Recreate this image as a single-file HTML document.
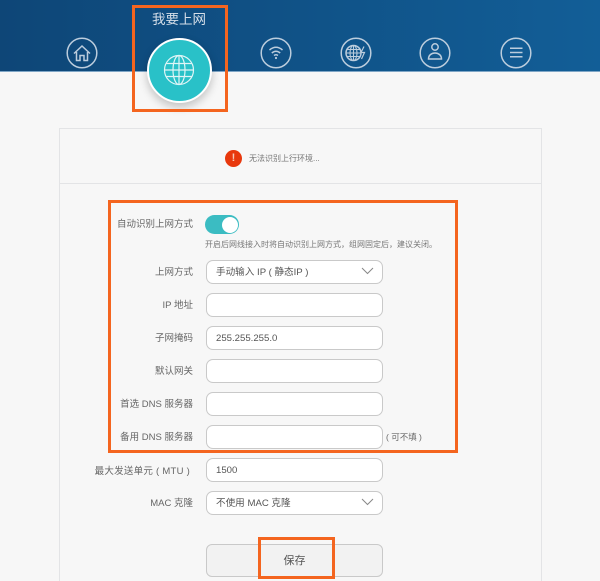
<!DOCTYPE html>
<html lang="zh"><head><meta charset="utf-8"><style>
html,body{margin:0;padding:0;width:600px;height:581px;overflow:hidden}
body{background:#f7f7f7;font-family:"Liberation Sans","Noto Sans CJK SC",sans-serif;color:#555}
#w{position:relative;width:600px;height:581px;overflow:hidden}
.a{position:absolute}
#hd{left:0;top:0;width:600px;height:72px;background:linear-gradient(90deg,#0e4677,#125e97);border-bottom:1px solid #7fa6c6;box-sizing:border-box}
.card{left:59px;top:128px;width:483px;height:453px;box-sizing:border-box;border:1px solid #e3e4e6;border-bottom:0}
.div{left:60px;top:183px;width:481px;height:1px;background:#e3e4e6}
.l{right:407px;font-size:9.500px;line-height:14px;white-space:nowrap;color:#666}
.i{left:206px;width:177px;height:24px;box-sizing:border-box;background:#fff;border:1px solid #c9c9c9;border-radius:7px;font-size:9.600px;line-height:24px;padding-left:9px;color:#555;white-space:nowrap}
.o{box-sizing:border-box;border:3px solid #f4651f}
svg{position:absolute;overflow:visible}
.t{filter:blur(.3px)}
</style></head><body><div id="w">
<div class="a" id="hd"></div>
<div class="a t" style="left:152px;top:11px;font-size:13.500px;line-height:17px;color:#d5dee8">我要上网</div>
<svg class="a t" style="left:0;top:0" width="600" height="110" fill="none" stroke="#bccddd" stroke-width="1.500">
<circle cx="82" cy="53" r="14.800"/><path d="M74 53.500 82 46l8 7.500M76.500 52v8.500h3.500v-5h4v5h3.500V52"/>
<circle cx="276" cy="53" r="14.800"/><path d="M269.500 50q6.500-5.500 13 0M271.800 53q4.200-3.500 8.400 0M274 55.500q2-1.500 4 0"/><circle cx="276" cy="58" r="1.100" fill="#bccddd" stroke="none"/>
<circle cx="356" cy="53" r="14.800"/><circle cx="353.500" cy="53" r="7.500"/><path d="M346 53h15M347 49.500h13M347 56.500h13M353.500 45.500v15" stroke-width="1.100"/><ellipse cx="353.500" cy="53" rx="3.500" ry="7.500" stroke-width="1.100"/><path d="M364 46.500l-3 6h3.500l-3 6.500" stroke-width="1.200"/>
<circle cx="435" cy="53" r="14.800"/><circle cx="435" cy="47" r="3.200"/><path d="M428.500 59c0-8 13-8 13 0z"/>
<circle cx="516" cy="53" r="14.800"/><path d="M510 48.300h12.500M510 52.500h12.500M510 56.700h12.500"/>
</svg>
<div class="a" style="left:147px;top:38px;width:65px;height:65px;box-sizing:border-box;border-radius:50%;background:#29c1c8;border:2px solid #fff;box-shadow:0 4px 9px rgba(0,0,0,.22)"></div>
<svg class="a t" style="left:0;top:0" width="600" height="110" fill="none" stroke="#dff5f6" stroke-width="1.200">
<circle cx="179" cy="70" r="14.500"/><ellipse cx="179" cy="70" rx="6" ry="14.500"/><path d="M179 55.500v29M164.500 70h29M166.500 63.500h25M166.500 76.500h25"/>
</svg>
<div class="a card"></div><div class="a div"></div>
<div class="a t" style="left:225px;top:150px;width:17px;height:17px;border-radius:50%;background:#e8380d;color:#f5c9b8;font-size:11px;font-weight:bold;line-height:17px;text-align:center">!</div>
<div class="a t" style="left:249px;top:152px;font-size:8px;line-height:14px;color:#777">无法识别上行环境...</div>
<div class="a l t" style="top:218px">自动识别上网方式</div>
<div class="a" style="left:205px;top:215px;width:34px;height:19px;border-radius:10px;background:#3bbcc2"></div>
<div class="a" style="left:222px;top:216.500px;width:16px;height:16px;border-radius:50%;background:#fff"></div>
<div class="a t" style="left:205px;top:238.500px;font-size:8px;line-height:12px;color:#777;white-space:nowrap">开启后网线接入时将自动识别上网方式，组网固定后，建议关闭。</div>
<div class="a l t" style="top:266px">上网方式</div>
<div class="a i" style="top:260px"><span class="t" style="display:inline-block">手动输入 IP ( 静态IP )</span></div>
<div class="a l t" style="top:299px">IP 地址</div>
<div class="a i" style="top:293px"></div>
<div class="a l t" style="top:332px">子网掩码</div>
<div class="a i" style="top:326px"><span class="t" style="display:inline-block">255.255.255.0</span></div>
<div class="a l t" style="top:365px">默认网关</div>
<div class="a i" style="top:359px"></div>
<div class="a l t" style="top:398px">首选 DNS 服务器</div>
<div class="a i" style="top:392px"></div>
<div class="a l t" style="top:431px">备用 DNS 服务器</div>
<div class="a i" style="top:425px"></div>
<div class="a t" style="left:386px;top:430px;font-size:8.500px;line-height:14px;color:#666">( 可不填 )</div>
<div class="a l t" style="top:465px;right:410px;letter-spacing:.25px">最大发送单元 ( MTU )</div>
<div class="a i" style="top:458px"><span class="t" style="display:inline-block">1500</span></div>
<div class="a l t" style="top:497px">MAC 克隆</div>
<div class="a i" style="top:491px"><span class="t" style="display:inline-block">不使用 MAC 克隆</span></div>
<svg class="a" style="left:0;top:0" width="600" height="581" fill="none" stroke="#888" stroke-width="1"><path d="M362 268l5.500 5.500 5.500-5.500M362 499l5.500 5.500 5.500-5.500"/></svg>
<div class="a" style="left:206px;top:544px;width:177px;height:33px;box-sizing:border-box;background:#f2f2f2;border:1px solid #c9c9c9;border-radius:6px"></div>
<div class="a t" style="left:206px;top:553px;width:177px;font-size:11px;line-height:16px;text-align:center;color:#555">保存</div>
<div class="a o" style="left:132px;top:5px;width:96px;height:107px"></div>
<div class="a o" style="left:108px;top:200px;width:350px;height:253px"></div>
<div class="a o" style="left:258px;top:537px;width:77px;height:42px"></div>
</div></body></html>
